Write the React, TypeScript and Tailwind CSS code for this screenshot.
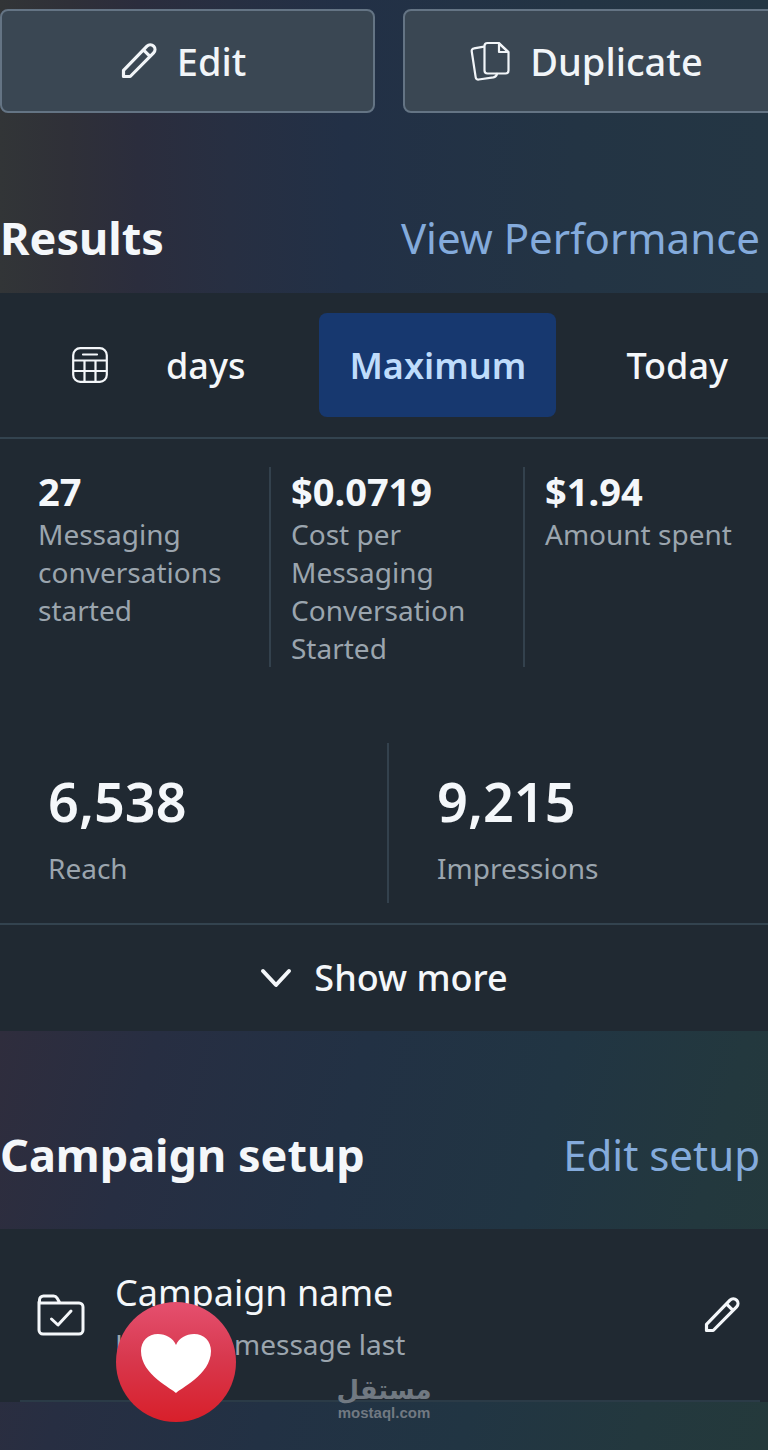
import type { ReactNode } from "react";

function PencilIcon() {
  return (
    <svg width="36" height="36" viewBox="0 0 36 36" fill="none" stroke="currentColor" strokeWidth="3.2" strokeLinejoin="round" aria-hidden="true">
      <path d="M2.5 33.5v-6.2L26 3.200a4.600 4.600 0 0 1 6.600 6.600L9.2 33.5z" />
      <path d="M22.4 6.800l6.600 6.600" />
    </svg>
  );
}

function DuplicateIcon() {
  return (
    <svg width="40" height="40" viewBox="0 0 40 40" fill="none" stroke="currentColor" strokeWidth="2.2" strokeLinecap="round" strokeLinejoin="round" aria-hidden="true">
      <path d="M14 5.6L4 7.3a2.6 2.6 0 0 0-2.3 3l4 26a2.6 2.6 0 0 0 3 2.2L23.4 36.400a4.500 4.500 0 0 0 3.600-3.600" />
      <path d="M17.500 2h11.500L38.500 11v18.500a3 3 0 0 1-3 3h-18a3 3 0 0 1-3-3V5a3 3 0 0 1 3-3z" />
      <path d="M29 2.500v8.500h9z" />
    </svg>
  );
}

function CalendarIcon() {
  return (
    <svg width="36" height="36" viewBox="0 0 36 36" fill="none" stroke="currentColor" strokeWidth="2.2" strokeLinecap="round" aria-hidden="true">
      <rect x="1.200" y="1.200" width="33.600" height="33.600" rx="7" />
      <path d="M11 7.500h14M2 13.500h32M2 24h32M12.500 13.500V34M23.500 13.500V34" />
    </svg>
  );
}

function FolderCheckIcon() {
  return (
    <svg width="48" height="42" viewBox="0 0 48 42" fill="none" stroke="currentColor" strokeWidth="3" strokeLinecap="round" strokeLinejoin="round" aria-hidden="true">
      <path d="M2 8v28a4 4 0 0 0 4 4h36a4 4 0 0 0 4-4V13a4 4 0 0 0-4-4H2.500V6a4 4 0 0 1 4-4h10a4 4 0 0 1 3.500 2l3 5" />
      <path d="M14.500 25l6.500 6 13-14" />
    </svg>
  );
}

function ChevronIcon() {
  return (
    <svg width="32" height="22" viewBox="0 0 32 22" fill="none" stroke="currentColor" strokeWidth="4" strokeLinecap="round" strokeLinejoin="round" aria-hidden="true">
      <path d="M3 4l13 14L29 4" />
    </svg>
  );
}

function LoveReaction() {
  return (
    <svg width="120" height="120" viewBox="0 0 120 120" role="img" aria-label="Love">
      <defs>
        <linearGradient id="love" x1="0" y1="0" x2="0" y2="1">
          <stop offset="0" stopColor="#e5506f" />
          <stop offset="0.450" stopColor="#d8394f" />
          <stop offset="1" stopColor="#d81f2a" />
        </linearGradient>
      </defs>
      <circle cx="60" cy="60" r="60" fill="url(#love)" />
      <path
        d="M60 91C57 87 25 73 25 49c0-10 7-17 17-17 8 0 15 4 18 11 3-7 10-11 18-11 10 0 17 7 17 17 0 24-32 38-35 42z"
        fill="#fff"
      />
    </svg>
  );
}

const metrics = [
  { value: "27", label: "Messaging conversations started" },
  { value: "$0.0719", label: "Cost per Messaging Conversation Started" },
  { value: "$1.94", label: "Amount spent" },
];

const totals = [
  { value: "6,538", label: "Reach" },
  { value: "9,215", label: "Impressions" },
];

function ActionButton({ icon, label }: { icon: ReactNode; label: string }) {
  return (
    <button
      type="button"
      className="flex h-[104px] items-center justify-center gap-5 rounded-lg border-2 border-[#647484] bg-[#3a4753] pr-2 text-[38px] font-medium text-[#f1f5f8]"
    >
      {icon}
      {label}
    </button>
  );
}

function SectionHeader({ title, action }: { title: string; action: string }) {
  return (
    <div className="flex items-center justify-between pr-2">
      <h2 className="text-[45px] leading-[60px] font-bold text-[#f4f7fa]">{title}</h2>
      <a href="#" className="text-[42px] leading-[60px] text-[#84abdc]">
        {action}
      </a>
    </div>
  );
}

export default function App() {
  return (
    <div className="min-h-screen overflow-x-hidden bg-[#223344] bg-[linear-gradient(90deg,#323537_0%,#2f3038_9%,#2b2d3d_18%,#272f42_30%,#223046_45%,#233444_75%,#243644_100%)] font-['Noto_Sans','Open_Sans',sans-serif] text-[#f4f7fa]">
      <div className="-mr-[10px] grid grid-cols-2 gap-7 pt-[9px]">
        <ActionButton icon={<PencilIcon />} label="Edit" />
        <ActionButton icon={<DuplicateIcon />} label="Duplicate" />
      </div>

      <section className="pt-[95px]">
        <SectionHeader title="Results" action="View Performance" />

        <div className="mt-[25px] bg-[#202932]">
          {/* Date range */}
          <div className="flex items-center border-b-2 border-[#33434f] py-5 pl-[72px] text-[36px] font-medium">
            <button type="button" aria-label="Pick dates">
              <CalendarIcon />
            </button>
            <button type="button" className="ml-[58px] pt-0.5">
              days
            </button>
            <button
              type="button"
              aria-pressed="true"
              className="ml-[74px] h-[104px] rounded-lg bg-[#17386f] px-[30px] pt-0.5 font-semibold text-[#bfdcfb]"
            >
              Maximum
            </button>
            <button type="button" className="ml-[70px] pt-0.5">
              Today
            </button>
          </div>

          <dl className="grid grid-cols-[271fr_254fr_243fr] pt-7">
            {metrics.map((m, i) => (
              <div
                key={m.label}
                className={
                  i === 0
                    ? "flex flex-col-reverse justify-end border-r-2 border-[#33414d] pl-[38px]"
                    : i === 1
                      ? "flex flex-col-reverse justify-end border-r-2 border-[#33414d] pl-5"
                      : "flex flex-col-reverse justify-end pl-5"
                }
              >
                <dt className="text-[28px] leading-[38px] text-[#9ba5ae]">{m.label}</dt>
                <dd className="text-[38px] leading-[48px] font-bold">{m.value}</dd>
              </div>
            ))}
          </dl>

          <dl className="mt-[76px] grid grid-cols-[389fr_379fr] pb-5">
            {totals.map((t, i) => (
              <div
                key={t.label}
                className={
                  i === 0
                    ? "flex flex-col-reverse gap-[14px] border-r-2 border-[#33414d] pt-6 pb-4 pl-12"
                    : "flex flex-col-reverse gap-[14px] pt-6 pb-4 pl-12"
                }
              >
                <dt className="text-[28px] leading-[38px] text-[#9ba5ae]">{t.label}</dt>
                <dd className="text-[54px] leading-[68px] font-semibold">{t.value}</dd>
              </div>
            ))}
          </dl>

          <button
            type="button"
            className="flex h-[108px] w-full items-center justify-center gap-[22px] border-t-2 border-[#33434f] text-[36px] font-medium"
          >
            <ChevronIcon />
            Show more
          </button>
        </div>
      </section>

      <section className="bg-[linear-gradient(105deg,#2f2d3d_0%,#272e42_18%,#223144_42%,#213543_65%,#23383e_85%,#24393b_100%)] pt-[94px] pb-12">
        <SectionHeader title="Campaign setup" action="Edit setup" />

        <div className="relative mt-11 bg-[#202932]">
          <div className="flex items-center pt-[38px] pr-7 pb-[31px] pl-[37px]">
            <span className="mb-1.5">
              <FolderCheckIcon />
            </span>
            <div className="ml-[30px] flex-1">
              <h3 className="text-[36px] leading-[52px]">Campaign name</h3>
              <p className="flex text-[28px] leading-[50px] text-[#9ba5ae]">
                <span className="w-[119px]">L</span>
                <span>message last</span>
              </p>
            </div>
            <button type="button" aria-label="Edit campaign name" className="mb-1.5">
              <PencilIcon />
            </button>
          </div>
          <div className="mr-2 ml-5 border-b-2 border-[#2b3b47]" />

          <div className="absolute top-[73px] left-[116px]">
            <LoveReaction />
          </div>
          <div className="absolute inset-x-0 top-[146px] flex flex-col items-center text-[#717982]">
            <span lang="ar" dir="rtl" className="font-['DejaVu_Sans',sans-serif] text-[26px] leading-[30px] font-bold">
              مستقل
            </span>
            <span className="font-['Liberation_Sans',sans-serif] text-[15px] leading-4 font-bold">mostaql.com</span>
          </div>
        </div>
      </section>
    </div>
  );
}
